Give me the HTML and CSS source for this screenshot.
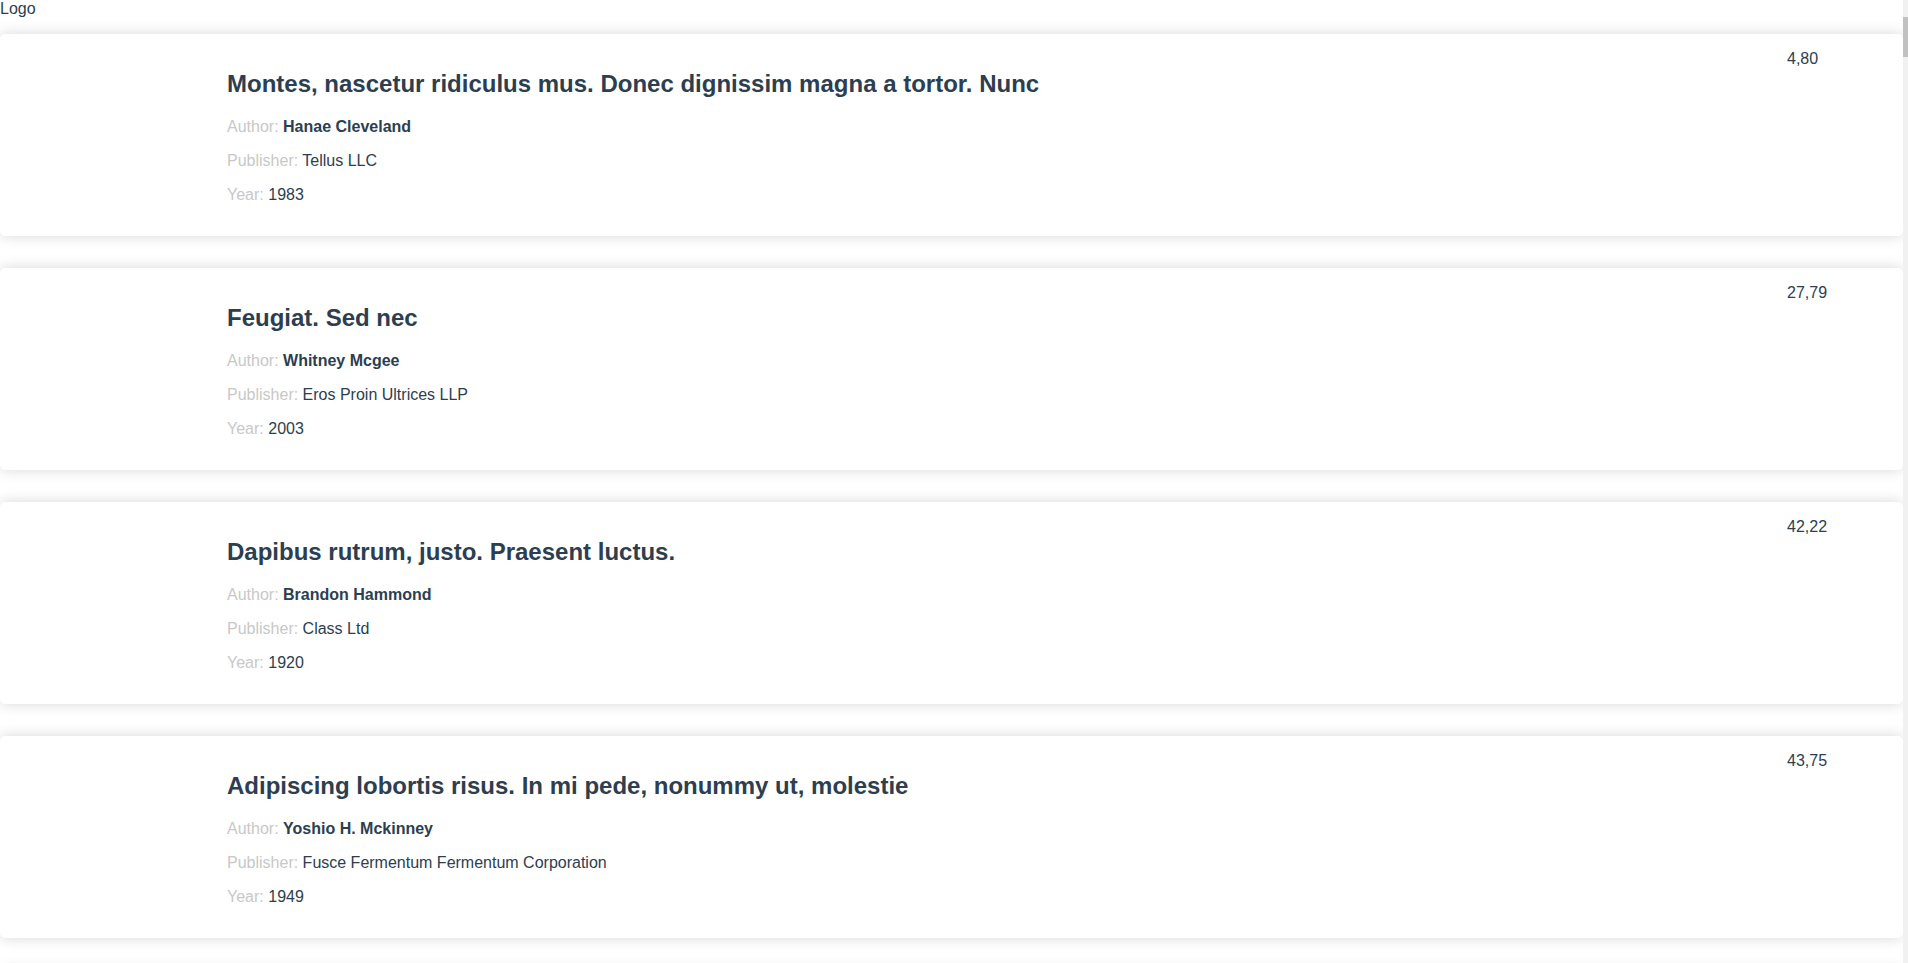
FILE: index.html
```html
<!DOCTYPE html>
<html lang="en">
<head>
<meta charset="utf-8">
<title>Books</title>
<link rel="stylesheet" href="styles.css">
</head>
<body>
<header class="header">Logo</header>
<main class="list">
  <article class="card">
    <div class="cover"></div>
    <div class="info">
      <h2 class="title">Montes, nascetur ridiculus mus. Donec dignissim magna a tortor. Nunc</h2>
      <p class="row"><span class="label">Author:</span> <strong>Hanae Cleveland</strong></p>
      <p class="row"><span class="label">Publisher:</span> Tellus LLC</p>
      <p class="row"><span class="label">Year:</span> 1983</p>
    </div>
    <div class="price">4,80</div>
  </article>
  <article class="card">
    <div class="cover"></div>
    <div class="info">
      <h2 class="title">Feugiat. Sed nec</h2>
      <p class="row"><span class="label">Author:</span> <strong>Whitney Mcgee</strong></p>
      <p class="row"><span class="label">Publisher:</span> Eros Proin Ultrices LLP</p>
      <p class="row"><span class="label">Year:</span> 2003</p>
    </div>
    <div class="price">27,79</div>
  </article>
  <article class="card">
    <div class="cover"></div>
    <div class="info">
      <h2 class="title">Dapibus rutrum, justo. Praesent luctus.</h2>
      <p class="row"><span class="label">Author:</span> <strong>Brandon Hammond</strong></p>
      <p class="row"><span class="label">Publisher:</span> Class Ltd</p>
      <p class="row"><span class="label">Year:</span> 1920</p>
    </div>
    <div class="price">42,22</div>
  </article>
  <article class="card">
    <div class="cover"></div>
    <div class="info">
      <h2 class="title">Adipiscing lobortis risus. In mi pede, nonummy ut, molestie</h2>
      <p class="row"><span class="label">Author:</span> <strong>Yoshio H. Mckinney</strong></p>
      <p class="row"><span class="label">Publisher:</span> Fusce Fermentum Fermentum Corporation</p>
      <p class="row"><span class="label">Year:</span> 1949</p>
    </div>
    <div class="price">43,75</div>
  </article>
  <article class="card">
    <div class="cover"></div>
    <div class="info">
      <h2 class="title">Nulla facilisis. Suspendisse commodo tincidunt nibh</h2>
      <p class="row"><span class="label">Author:</span> <strong>Kibo Wallace</strong></p>
      <p class="row"><span class="label">Publisher:</span> Lorem Ipsum Institute</p>
      <p class="row"><span class="label">Year:</span> 1967</p>
    </div>
    <div class="price">18,40</div>
  </article>
  <article class="card">
    <div class="cover"></div>
    <div class="info">
      <h2 class="title">Magna. Sed eu eros. Nam consequat dolor</h2>
      <p class="row"><span class="label">Author:</span> <strong>Ulla Rowe</strong></p>
      <p class="row"><span class="label">Publisher:</span> Mauris Inc.</p>
      <p class="row"><span class="label">Year:</span> 1991</p>
    </div>
    <div class="price">9,15</div>
  </article>
  <article class="card">
    <div class="cover"></div>
    <div class="info">
      <h2 class="title">Vitae aliquam eros turpis non enim</h2>
      <p class="row"><span class="label">Author:</span> <strong>Aretha Ball</strong></p>
      <p class="row"><span class="label">Publisher:</span> Vel Arcu Company</p>
      <p class="row"><span class="label">Year:</span> 2011</p>
    </div>
    <div class="price">31,02</div>
  </article>
  <article class="card">
    <div class="cover"></div>
    <div class="info">
      <h2 class="title">Curabitur consequat, lectus sit amet luctus vulputate</h2>
      <p class="row"><span class="label">Author:</span> <strong>Dane Holloway</strong></p>
      <p class="row"><span class="label">Publisher:</span> Nec Metus Facilisis Ltd</p>
      <p class="row"><span class="label">Year:</span> 1936</p>
    </div>
    <div class="price">12,68</div>
  </article>
  <article class="card">
    <div class="cover"></div>
    <div class="info">
      <h2 class="title">Phasellus dolor elit, pellentesque a, facilisis non</h2>
      <p class="row"><span class="label">Author:</span> <strong>Nora Pittman</strong></p>
      <p class="row"><span class="label">Publisher:</span> Aliquet Associates</p>
      <p class="row"><span class="label">Year:</span> 1978</p>
    </div>
    <div class="price">25,90</div>
  </article>
  <article class="card">
    <div class="cover"></div>
    <div class="info">
      <h2 class="title">Egestas. Aliquam fringilla cursus purus</h2>
      <p class="row"><span class="label">Author:</span> <strong>Colton Sharp</strong></p>
      <p class="row"><span class="label">Publisher:</span> Orci Consulting</p>
      <p class="row"><span class="label">Year:</span> 2007</p>
    </div>
    <div class="price">38,11</div>
  </article>
</main>
<div class="scrollbar" aria-hidden="true"><div class="scrollbar-thumb"></div></div>
</body>
</html>
```

FILE: styles.css
```css
html {
  background: #fff;
}
body {
  margin: 0;
  padding-right: 5px;
  font-family: "Liberation Sans", Arial, sans-serif;
  font-size: 16px;
  color: #2c3e50;
}
.header {
  line-height: normal;
}
.list {
  display: flex;
  flex-direction: column;
  gap: 32px;
  padding: 16px 0 32px;
}
.card {
  display: grid;
  grid-template-columns: 195px 1fr 100px;
  gap: 16px;
  padding: 16px;
  background: #fff;
  border-radius: 5px;
  box-shadow: 0 0 14px rgba(0, 0, 0, 0.16);
}
.info {
  min-width: 0;
}
.title {
  font-size: 24px;
  font-weight: bold;
  margin: 20px 0;
}
.row {
  margin: 16px 0;
  line-height: 18px;
}
.label {
  color: #c8c8c8;
}
.price {
  line-height: 18px;
}
.scrollbar {
  position: fixed;
  top: 0;
  right: 0;
  bottom: 0;
  width: 5px;
  background: #f1f1f1;
}
.scrollbar-thumb {
  margin-top: 17px;
  height: 40px;
  background: #c1c1c1;
}
```
